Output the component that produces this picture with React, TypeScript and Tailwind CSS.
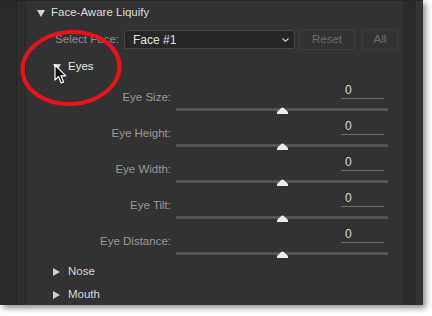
import React from "react";

const font = { fontFamily: '"Liberation Sans", Arial, sans-serif' };

function DownTri({ color = "#cfcfcf" }: { color?: string }) {
  return (
    <svg width="8" height="7" viewBox="0 0 8 7" className="shrink-0">
      <polygon points="0,0 8,0 4,7" fill={color} />
    </svg>
  );
}

function RightTri() {
  return (
    <svg width="7" height="8" viewBox="0 0 7 8" className="shrink-0">
      <polygon points="0,0 7,4 0,8" fill="#cfcfcf" />
    </svg>
  );
}

function SliderRow({ label }: { label: string }) {
  return (
    <div className="flex items-start h-[36px]">
      <div className="w-[145px] text-right text-[11.5px] leading-[14px] mt-[7px] text-[#9a9a9a]">
        {label}
      </div>
      <div className="ml-[5px] w-[212px] flex flex-col">
        <div className="flex justify-end pr-[4px]">
          <div className="w-[43px] h-[16px] border-b border-[#6b6b6b] pl-[4px] text-[12px] leading-[14px] text-[#d6dbe0]">
            0
          </div>
        </div>
        <div className="relative mt-[9px] h-[3px] bg-[#545454]">
          <svg
            width="11"
            height="7"
            viewBox="0 0 11 7"
            className="absolute left-[101px] top-[-1px]"
          >
            <path
              d="M0 7 L0 5.5 C0 4 2.5 3 4 1.2 C4.8 0.2 6.2 0.2 7 1.2 C8.5 3 11 4 11 5.5 L11 7 Z"
              fill="#ececec"
            />
          </svg>
        </div>
      </div>
    </div>
  );
}

export default function App() {
  return (
    <div className="w-[432px] h-[316px] bg-white relative overflow-hidden" style={font}>
      <div className="w-[423px] h-[305px] flex flex-col shadow-[3px_3px_6px_rgba(0,0,0,0.45)]">
        <div className="h-[1px] bg-[#262626]" />
        <div className="flex flex-1">
          <div className="w-[16px] bg-[#2a2a2a]" />
          <div className="w-[1px] bg-[#232323]" />
          <div className="w-[8px] bg-[#2e2e2e]" />
          <div className="w-[1px] bg-[#272727]" />
          <div className="flex-1 bg-[#323232] flex flex-col">
            {/* Header */}
            <div className="h-[24px] flex items-center pl-[11px] gap-[6px]">
              <DownTri color="#d4d4d4" />
              <span className="text-[11.5px] text-[#dedede]">Face-Aware Liquify</span>
            </div>
            {/* Select face row */}
            <div className="mt-[3px] h-[23px] flex items-center">
              <div className="w-[98px] pr-[5px] text-right text-[11.5px] text-[#8e8e8e]">
                Select Face:
              </div>
              <div className="w-[171px] h-[19px] bg-[#262626] border border-[#444444] rounded-[2px] flex items-center justify-between pl-[8px] pr-[5px]">
                <span className="text-[12px] text-[#e2e2e2]">Face #1</span>
                <svg width="7" height="4" viewBox="0 0 7 4">
                  <path d="M0.5 0.5 L3.5 3.3 L6.5 0.5" fill="none" stroke="#cfcfcf" strokeWidth="1.1" />
                </svg>
              </div>
              <div className="ml-[4px] w-[56px] h-[21px] border border-[#3e3e3e] rounded-[2px] flex items-center justify-center text-[11.5px] text-[#6c6c6c]">
                Reset
              </div>
              <div className="ml-[7px] w-[36px] h-[21px] border border-[#3a3a3a] rounded-[2px] flex items-center justify-center text-[11.5px] text-[#6c6c6c]">
                All
              </div>
            </div>
            {/* Eyes */}
            <div className="mt-[4px] h-[24px] flex items-center pl-[27px] gap-[7px]">
              <DownTri />
              <span className="text-[11.5px] text-[#e6e6e6]">Eyes</span>
            </div>
            <div className="mt-[4px] flex flex-col">
              <SliderRow label="Eye Size:" />
              <SliderRow label="Eye Height:" />
              <SliderRow label="Eye Width:" />
              <SliderRow label="Eye Tilt:" />
              <SliderRow label="Eye Distance:" />
            </div>
            <div className="h-[18px] flex items-center pl-[27px] gap-[8px]">
              <RightTri />
              <span className="text-[11.5px] text-[#d8d8d8]">Nose</span>
            </div>
            <div className="mt-[5px] h-[18px] flex items-center pl-[27px] gap-[8px]">
              <RightTri />
              <span className="text-[11.5px] text-[#d8d8d8]">Mouth</span>
            </div>
          </div>
          <div className="w-[13px] bg-[#2a2a2a]" />
          <div className="w-[7px] bg-[#333333]" />
        </div>
      </div>

      {/* Red annotation ellipse */}
      <svg
        width="104"
        height="80"
        viewBox="0 0 104 80"
        className="absolute left-[19px] top-[28px] pointer-events-none"
      >
        <ellipse
          cx="52"
          cy="40"
          rx="48.5"
          ry="36"
          fill="none"
          stroke="#e8121b"
          strokeWidth="4"
          transform="rotate(-4 52 40)"
        />
      </svg>

      {/* Cursor */}
      <svg
        width="13"
        height="21"
        viewBox="0 0 13 21"
        className="absolute left-[54px] top-[64px] pointer-events-none"
      >
        <path
          d="M1 1 L1 16 L4.5 12.6 L7.2 19 L9.6 18 L7 11.8 L11.8 11.8 Z"
          fill="#111"
          stroke="#fff"
          strokeWidth="1.2"
          strokeLinejoin="round"
        />
      </svg>
    </div>
  );
}
